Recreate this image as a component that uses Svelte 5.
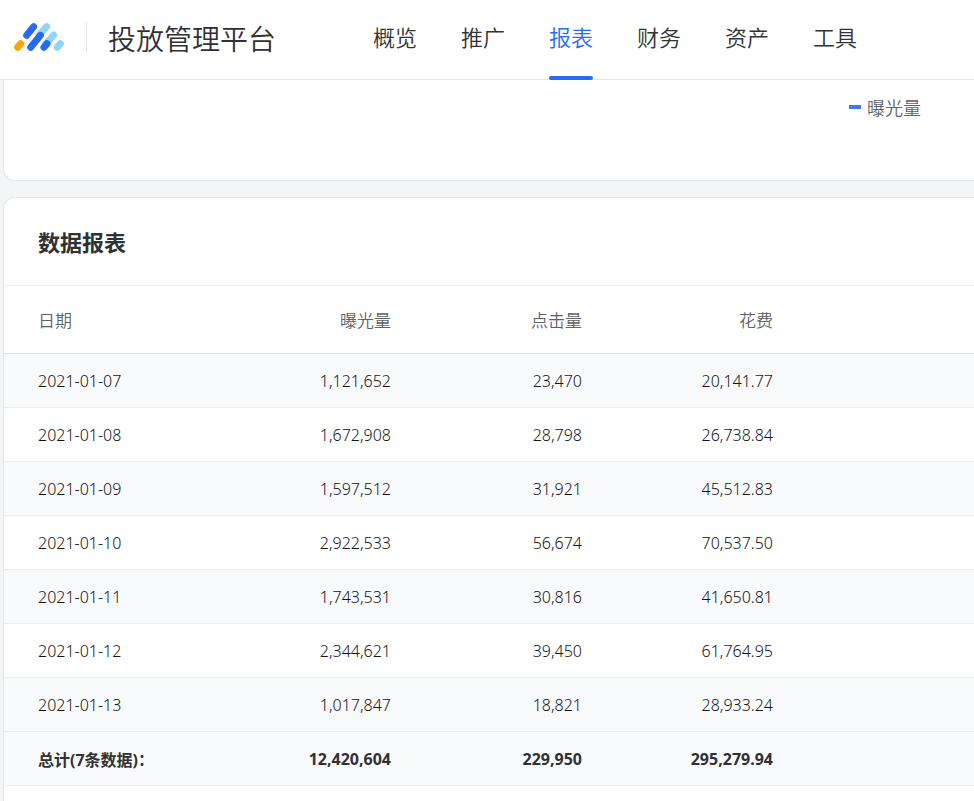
<script>
  const nav = ['概览', '推广', '报表', '财务', '资产', '工具'];
  const active = '报表';
  const rows = [
    ['2021-01-07', '1,121,652', '23,470', '20,141.77'],
    ['2021-01-08', '1,672,908', '28,798', '26,738.84'],
    ['2021-01-09', '1,597,512', '31,921', '45,512.83'],
    ['2021-01-10', '2,922,533', '56,674', '70,537.50'],
    ['2021-01-11', '1,743,531', '30,816', '41,650.81'],
    ['2021-01-12', '2,344,621', '39,450', '61,764.95'],
    ['2021-01-13', '1,017,847', '18,821', '28,933.24'],
  ];
</script>

<div class="page">
  <header>
    <svg class="logo" viewBox="39 36 156 90" aria-hidden="true">
      <g fill="none" stroke-width="21" stroke-linecap="round">
        <g stroke="#91d5ff">
          <path d="M117 75L140 50" />
          <path d="M138 101L161 75" />
          <path d="M172 112L181 101" />
        </g>
        <g stroke="#296bef">
          <path d="M80 76L101 50" />
          <path d="M92 112L121 76" />
          <path d="M132 112L141 101" />
        </g>
        <path stroke="#ffa400" d="M53 112L62 101" />
      </g>
    </svg>
    <span class="divider"></span>
    <span class="brand">投放管理平台</span>
    <nav>
      {#each nav as item}
        <a href="#{item}" class:active={item === active}>{item}</a>
      {/each}
    </nav>
  </header>

  <main>
    <section class="card chart">
      <div class="legend"><span class="mark"></span>曝光量</div>
    </section>

    <section class="card report">
      <h2>数据报表</h2>
      <table>
        <colgroup>
          <col class="date" /><col class="num" /><col class="num" /><col class="num" /><col />
        </colgroup>
        <thead>
          <tr><th>日期</th><th>曝光量</th><th>点击量</th><th>花费</th><td></td></tr>
        </thead>
        <tbody>
          {#each rows as row}
            <tr>
              {#each row as cell}<td>{cell}</td>{/each}
              <td></td>
            </tr>
          {/each}
        </tbody>
        <tfoot>
          <tr><td>总计(7条数据)：</td><td>12,420,604</td><td>229,950</td><td>295,279.94</td><td></td></tr>
        </tfoot>
      </table>
    </section>
  </main>
</div>

<style>
  :global(body) {
    margin: 0;
    background: #f4f5f7;
  }
  .page {
    box-sizing: border-box;
    min-height: 100vh;
    display: flex;
    flex-direction: column;
    overflow-x: hidden;
    font-family: 'Noto Sans', 'Noto Sans CJK SC', sans-serif;
    font-size: 16px;
    font-weight: 350;
    color: #303133;
  }
  header {
    display: flex;
    align-items: center;
    height: 79px;
    padding-left: 13px;
    border-bottom: 1px solid #e3e5e9;
    background: #fff;
    white-space: nowrap;
  }
  .logo {
    width: 52px;
    height: 30px;
    margin-bottom: 5px;
  }
  .divider {
    width: 1px;
    height: 30px;
    margin: 0 21px 5px;
    background: #e3e4e6;
  }
  .brand,
  nav {
    font-family: 'Noto Sans CJK SC', sans-serif;
  }
  .brand {
    padding-bottom: 4px;
    font-size: 28px;
    line-height: 40px;
  }
  nav {
    display: flex;
    align-self: stretch;
    gap: 44px;
    margin-left: 97px;
  }
  nav a {
    box-sizing: border-box;
    position: relative;
    height: 80px;
    font-size: 22px;
    line-height: 72px;
    color: #333;
    text-decoration: none;
  }
  nav a.active {
    color: #296bef;
  }
  nav a.active::after {
    content: '';
    position: absolute;
    left: 0;
    right: 0;
    bottom: 0;
    height: 4px;
    border-radius: 2px;
    background: #296bef;
  }
  main {
    flex: 1;
    display: flex;
    flex-direction: column;
    gap: 16px;
    padding-left: 3px;
  }
  .card {
    border: 1px solid #e4e6eb;
    border-right: 0;
    background: #fff;
  }
  .chart {
    height: 100px;
    border-top: 0;
    border-radius: 0 0 0 12px;
  }
  .legend {
    display: flex;
    justify-content: flex-end;
    align-items: center;
    gap: 6px;
    padding: 14px 53px 0 0;
    font-family: 'Noto Sans CJK SC', sans-serif;
    font-size: 18px;
    line-height: 26px;
    color: #606266;
  }
  .mark {
    width: 12px;
    height: 4px;
    background: #3f78f0;
  }
  .report {
    flex: 1;
    border-bottom: 0;
    border-radius: 12px 0 0 0;
  }
  h2 {
    margin: 0;
    padding: 28px 34px;
    border-bottom: 1px solid #ebedf0;
    font-family: 'Noto Sans CJK SC', sans-serif;
    font-size: 22px;
    font-weight: 700;
    line-height: 31px;
  }
  table {
    width: 100%;
    table-layout: fixed;
    border-collapse: separate;
    border-spacing: 0;
  }
  .date {
    width: 212px;
  }
  .num {
    width: 191px;
  }
  th,
  td {
    box-sizing: border-box;
    height: 54px;
    padding: 0 16px 0 0;
    border-bottom: 1px solid #ebedf0;
    text-align: right;
    white-space: nowrap;
  }
  th:first-child,
  td:first-child {
    padding-left: 34px;
    text-align: left;
  }
  thead th,
  thead td {
    height: 68px;
    border-bottom-color: #dfe2e6;
    font-family: 'Noto Sans CJK SC', sans-serif;
    font-size: 17px;
    font-weight: 350;
    color: #606266;
  }
  tbody td {
    color: #141517;
  }
  tbody tr:nth-child(odd) td,
  tfoot td {
    background: #f9fafc;
  }
  tfoot td {
    font-weight: 700;
  }
</style>
